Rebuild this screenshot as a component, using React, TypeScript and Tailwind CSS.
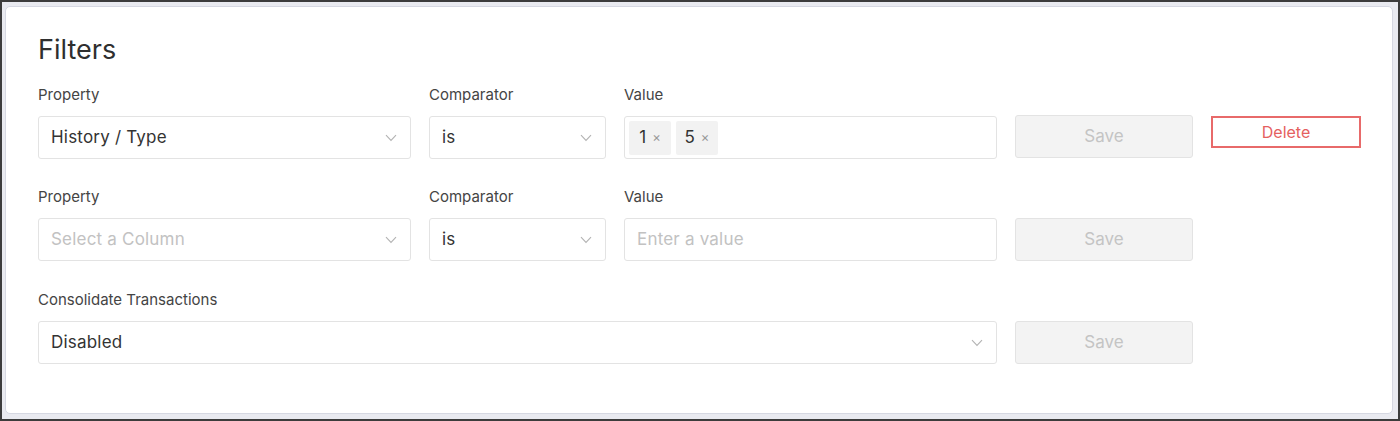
import { ReactNode } from "react";

const font = { fontFamily: "Inter, 'Noto Sans', sans-serif" };

function Chevron() {
  return (
    <svg width="12" height="8" viewBox="0 0 12 8" fill="none" className="shrink-0">
      <path d="M1 1.2 6 6.5 11 1.2" stroke="#b3b3b3" strokeWidth="1.1" />
    </svg>
  );
}

function Field({ label, width, children }: { label: string; width: string; children: ReactNode }) {
  return (
    <div className={`flex flex-col ${width}`}>
      <label className="text-[15px] text-[#444] leading-[18px] mb-[12px]">{label}</label>
      {children}
    </div>
  );
}

function Select({ text, placeholder }: { text: string; placeholder?: boolean }) {
  return (
    <div className="h-[43px] border border-[#e3e3e3] rounded-[3px] bg-white flex items-center justify-between pl-[12px] pr-[13px]">
      <span className={`text-[17px] tracking-[0.2px] ${placeholder ? "text-[#c2c2c2]" : "text-[#333]"}`}>{text}</span>
      <Chevron />
    </div>
  );
}

function SaveButton() {
  return (
    <button className="w-[178px] h-[43px] border border-[#e3e3e3] rounded-[3px] bg-[#f3f3f3] text-[#c4c4c4] text-[17px]">
      Save
    </button>
  );
}

function Chip({ value }: { value: string }) {
  return (
    <span className="h-[34px] w-[42px] bg-[#f2f2f2] rounded-[2px] flex items-center justify-center gap-[6px]">
      <span className="text-[17px] text-[#333]">{value}</span>
      <span className="text-[13px] text-[#999]">×</span>
    </span>
  );
}

export default function App() {
  return (
    <div className="w-[1400px] h-[421px] bg-[#3c3c3c] p-[2px]" style={font}>
      <div className="w-full h-full bg-[#e9eaf0] pt-[4px] pl-[3px] pr-[5px] pb-[5px]">
        <div className="w-full h-full bg-white border border-[#d6d8e2] rounded-[5px] pl-[32px] pt-[26px]">
          <h1 className="text-[27px] text-[#2f2f2f] leading-[34px] mb-[19px]">Filters</h1>

          <div className="flex gap-[18px] items-start">
            <Field label="Property" width="w-[373px]">
              <Select text="History / Type" />
            </Field>
            <Field label="Comparator" width="w-[177px]">
              <Select text="is" />
            </Field>
            <Field label="Value" width="w-[373px]">
              <div className="h-[43px] border border-[#e3e3e3] rounded-[3px] bg-white flex items-center gap-[5px] pl-[4px]">
                <Chip value="1" />
                <Chip value="5" />
              </div>
            </Field>
            <div className="pt-[29px]">
              <SaveButton />
            </div>
            <div className="pt-[30px]">
              <button className="w-[150px] h-[32px] border-2 border-[#e86a6a] text-[#e5605f] text-[16px] bg-white">
                Delete
              </button>
            </div>
          </div>

          <div className="flex gap-[18px] items-start mt-[29px]">
            <Field label="Property" width="w-[373px]">
              <Select text="Select a Column" placeholder />
            </Field>
            <Field label="Comparator" width="w-[177px]">
              <Select text="is" />
            </Field>
            <Field label="Value" width="w-[373px]">
              <div className="h-[43px] border border-[#e3e3e3] rounded-[3px] bg-white flex items-center pl-[12px]">
                <span className="text-[17px] tracking-[0.2px] text-[#c2c2c2]">Enter a value</span>
              </div>
            </Field>
            <div className="pt-[30px]">
              <SaveButton />
            </div>
          </div>

          <div className="flex gap-[18px] items-start mt-[30px]">
            <Field label="Consolidate Transactions" width="w-[959px]">
              <Select text="Disabled" />
            </Field>
            <div className="pt-[30px]">
              <SaveButton />
            </div>
          </div>
        </div>
      </div>
    </div>
  );
}
